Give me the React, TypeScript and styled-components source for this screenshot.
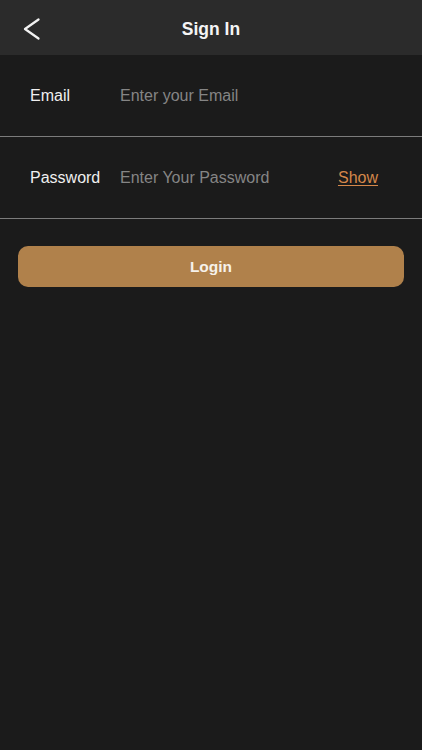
import React from "react";
import styled, { createGlobalStyle } from "styled-components";

const Global = createGlobalStyle`
  html, body { margin: 0; padding: 0; background: #1b1b1b; }
  body { font-family: "Liberation Sans", Arial, sans-serif; }
  #root { min-height: 750px; }
`;

const Page = styled.div`
  width: 422px;
  min-height: 750px;
  background: #1b1b1b;
  display: flex;
  flex-direction: column;
`;

const Header = styled.header`
  height: 55px;
  box-sizing: border-box;
  padding-top: 3px;
  background: #2b2b2b;
  display: grid;
  grid-template-columns: 60px 1fr 60px;
  align-items: center;
`;

const BackButton = styled.button`
  background: none;
  border: none;
  padding: 0 0 0 23px;
  height: 100%;
  display: flex;
  align-items: center;
  cursor: pointer;
`;

const Title = styled.h1`
  margin: 0;
  text-align: center;
  color: #f4f4f4;
  font-size: 17.5px;
  font-weight: 700;
`;

const Row = styled.div`
  height: 81px;
  display: flex;
  align-items: center;
  padding: 0 44px 0 30px;
  border-bottom: 1px solid #7c7c7c;
`;

const Label = styled.label`
  width: 90px;
  color: #efefef;
  font-size: 16px;
`;

const Input = styled.input`
  flex: 1;
  min-width: 0;
  background: transparent;
  border: none;
  outline: none;
  color: #eee;
  font-family: inherit;
  font-size: 16px;
  padding: 0;
  &::placeholder { color: #858585; }
`;

const ShowLink = styled.span`
  color: #d4874a;
  font-size: 16px;
  text-decoration: underline;
  text-underline-offset: 2px;
`;

const Form = styled.div`
  padding: 27px 18px 0;
`;

const LoginButton = styled.button`
  width: 100%;
  height: 41px;
  border: none;
  border-radius: 10px;
  background: #b0814b;
  color: #f6f1ea;
  font-family: inherit;
  font-size: 15.5px;
  font-weight: 700;
`;

export default function App() {
  return (
    <>
      <Global />
      <Page>
        <Header>
          <BackButton aria-label="Back">
            <svg width="18" height="22" viewBox="0 0 18 22" fill="none">
              <path d="M15.5 1.5 L2 11 L15.5 20.5" stroke="#f2f2f2" strokeWidth="2.2" strokeLinecap="round" strokeLinejoin="round" />
            </svg>
          </BackButton>
          <Title>Sign In</Title>
          <span />
        </Header>
        <Row>
          <Label>Email</Label>
          <Input placeholder="Enter your Email" />
        </Row>
        <Row>
          <Label>Password</Label>
          <Input type="password" placeholder="Enter Your Password" />
          <ShowLink>Show</ShowLink>
        </Row>
        <Form>
          <LoginButton>Login</LoginButton>
        </Form>
      </Page>
    </>
  );
}
